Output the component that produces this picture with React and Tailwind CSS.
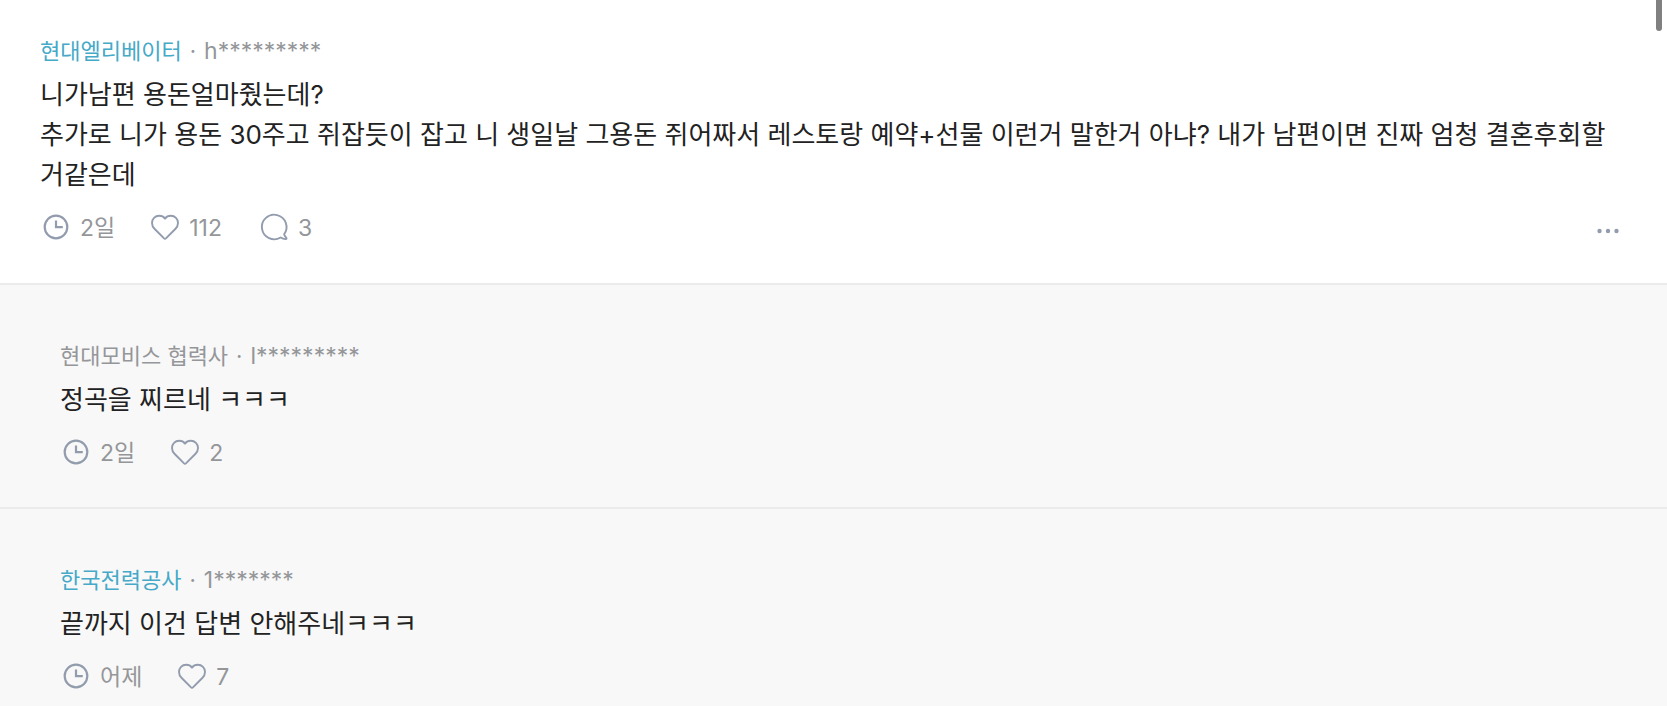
const comments = [
  {
    id: 1,
    company: '현대엘리베이터',
    linked: true,
    user: 'h*********',
    lines: [
      '니가남편 용돈얼마줬는데?',
      '추가로 니가 용돈 30주고 쥐잡듯이 잡고 니 생일날 그용돈 쥐어짜서 레스토랑 예약+선물 이런거 말한거 아냐? 내가 남편이면 진짜 엄청 결혼후회할거같은데',
    ],
    time: '2일',
    likes: 112,
    replies: 3,
  },
  {
    id: 2,
    isReply: true,
    company: '현대모비스 협력사',
    user: 'l*********',
    lines: ['정곡을 찌르네 ㅋㅋㅋ'],
    time: '2일',
    likes: 2,
  },
  {
    id: 3,
    isReply: true,
    company: '한국전력공사',
    linked: true,
    user: '1*******',
    lines: ['끝까지 이건 답변 안해주네ㅋㅋㅋ'],
    time: '어제',
    likes: 7,
  },
];

function ClockIcon() {
  return (
    <svg className="size-8 shrink-0" viewBox="0 0 32 32" fill="none" stroke="currentColor" strokeWidth="2.2" aria-hidden="true">
      <circle cx="16" cy="15" r="11.3" />
      <path d="M16 8.5V15.2h6.8" />
    </svg>
  );
}

function HeartIcon() {
  return (
    <svg className="size-8 shrink-0" viewBox="0 0 32 32" fill="none" stroke="currentColor" strokeWidth="1.9" strokeLinejoin="round" aria-hidden="true">
      <path d="M16 6.6C14.6 4.6 12.4 3.8 10.2 3.8C6 3.8 3 6.9 3 10.9C3 13.4 4 15.3 5.7 17L14.8 26.1Q16 27.2 17.2 26.1L26.3 17C28 15.3 29 13.4 29 10.9C29 6.9 26 3.8 21.8 3.8C19.6 3.8 17.4 4.6 16 6.6Z" />
    </svg>
  );
}

function BubbleIcon() {
  return (
    <svg className="size-8 shrink-0" viewBox="0 0 32 32" fill="none" stroke="currentColor" strokeWidth="1.9" strokeLinejoin="round" aria-hidden="true">
      <path d="M26.1 22.3A12.3 12.3 0 1 0 22.6 25.5C24.4 26.6 26.2 27.2 27.8 27.1C28.6 27 28.7 26.4 28.3 25.9C27.3 24.8 26.5 23.6 26.1 22.3Z" />
    </svg>
  );
}

function Comment({ comment }) {
  const { company, linked, user, lines, time, likes, replies, isReply } = comment;

  return (
    <article
      className={
        isReply
          ? 'border-b-2 border-[#ebebeb] bg-[#f8f8f8] pt-[53px] pr-10 pb-[38px] pl-[60px]'
          : 'border-b-2 border-[#ebebeb] bg-white pt-[33px] pr-10 pb-[39px] pl-10'
      }
    >
      <p className="flex items-baseline gap-2 text-[22px] leading-9 text-[#949699]">
        {linked ? <a href="#company" className="text-[#45a9c8]">{company}</a> : <span>{company}</span>}
        <span>·</span>
        <span className="text-[23px]">{user}</span>
      </p>

      <div className="mt-1.5 text-[26px] leading-10 text-[#222]">
        {lines.map((line) => (
          <p key={line}>{line}</p>
        ))}
      </div>

      <div className="mt-[17px] flex items-center text-[23px] leading-8 text-[#949699]">
        <span className="flex items-center gap-2">
          <span className="text-[#929cad]"><ClockIcon /></span>
          {time}
        </span>
        <button type="button" aria-label="좋아요" className="ml-[34px] flex items-center gap-2">
          <span className="text-[#929cad]"><HeartIcon /></span>
          {likes}
        </button>
        {replies && (
          <button type="button" aria-label="답글" className="ml-9 flex items-center gap-2">
            <span className="text-[#929cad]"><BubbleIcon /></span>
            {replies}
          </button>
        )}
        {!isReply && (
          <button type="button" aria-label="더보기" className="ml-auto flex text-[#929cad]">
            <svg className="size-8" viewBox="0 0 32 32" fill="currentColor" aria-hidden="true">
              <circle cx="4.5" cy="19" r="2.2" />
              <circle cx="13" cy="19" r="2.2" />
              <circle cx="21.5" cy="19" r="2.2" />
            </svg>
          </button>
        )}
      </div>
    </article>
  );
}

export default function App() {
  return (
    <main className="relative h-screen overflow-hidden bg-[#f8f8f8] font-[Inter,'Noto_Sans_CJK_KR',sans-serif]">
      {comments.map((comment) => (
        <Comment key={comment.id} comment={comment} />
      ))}

      {/* Scroll thumb */}
      <div className="absolute top-0 right-[5px] h-[31px] w-1.5 rounded-b-full bg-[#808080]" />
    </main>
  );
}
